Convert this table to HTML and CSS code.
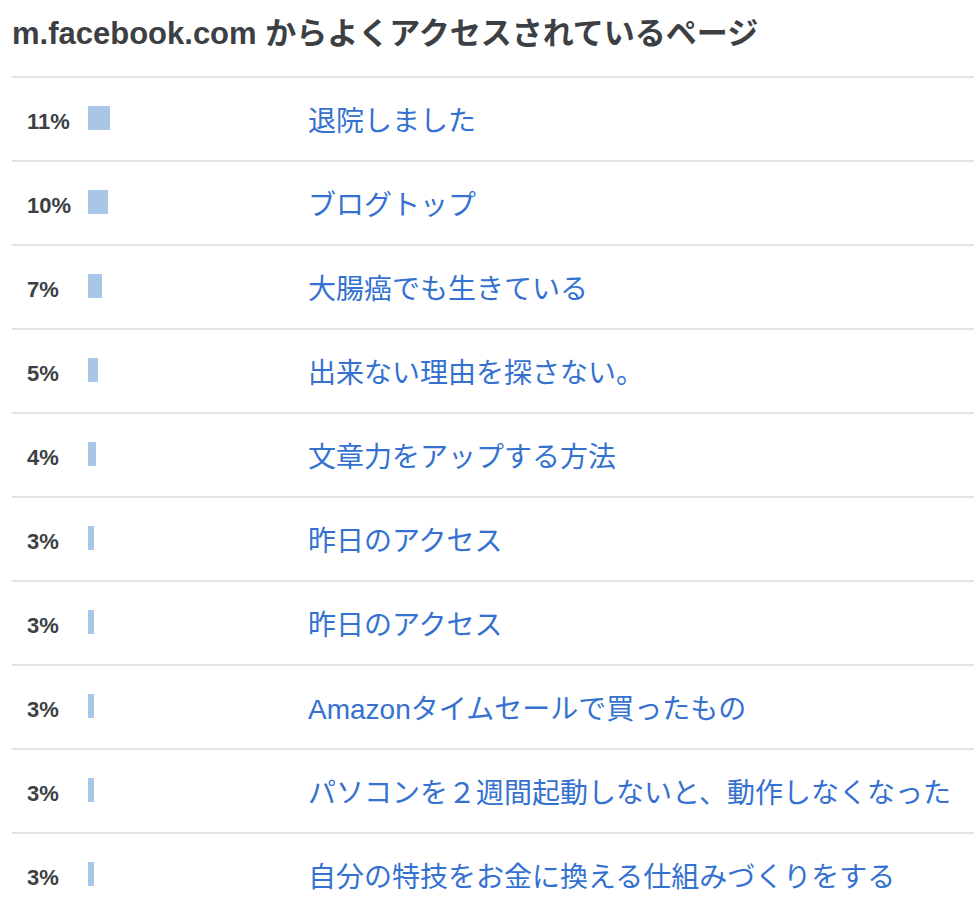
FILE: index.html
```html
<!DOCTYPE html>
<html lang="ja">
<head>
<meta charset="utf-8">
<title>m.facebook.com からよくアクセスされているページ</title>
<link rel="stylesheet" href="styles.css">
</head>
<body>
<section class="panel">
  <h2 class="title">m.facebook.com からよくアクセスされているページ</h2>
  <ul class="list">
    <li class="row"><span class="pct">11%</span><span class="barcell"><span class="bar" style="width:22px"></span></span><a class="link" href="#">退院しました</a></li>
    <li class="row"><span class="pct">10%</span><span class="barcell"><span class="bar" style="width:20px"></span></span><a class="link" href="#">ブログトップ</a></li>
    <li class="row"><span class="pct">7%</span><span class="barcell"><span class="bar" style="width:14px"></span></span><a class="link" href="#">大腸癌でも生きている</a></li>
    <li class="row"><span class="pct">5%</span><span class="barcell"><span class="bar" style="width:10px"></span></span><a class="link" href="#">出来ない理由を探さない。</a></li>
    <li class="row"><span class="pct">4%</span><span class="barcell"><span class="bar" style="width:8px"></span></span><a class="link" href="#">文章力をアップする方法</a></li>
    <li class="row"><span class="pct">3%</span><span class="barcell"><span class="bar" style="width:6px"></span></span><a class="link" href="#">昨日のアクセス</a></li>
    <li class="row"><span class="pct">3%</span><span class="barcell"><span class="bar" style="width:6px"></span></span><a class="link" href="#">昨日のアクセス</a></li>
    <li class="row"><span class="pct">3%</span><span class="barcell"><span class="bar" style="width:6px"></span></span><a class="link" href="#">Amazonタイムセールで買ったもの</a></li>
    <li class="row"><span class="pct">3%</span><span class="barcell"><span class="bar" style="width:6px"></span></span><a class="link" href="#">パソコンを２週間起動しないと、動作しなくなった</a></li>
    <li class="row"><span class="pct">3%</span><span class="barcell"><span class="bar" style="width:6px"></span></span><a class="link" href="#">自分の特技をお金に換える仕組みづくりをする</a></li>
  </ul>
</section>
</body>
</html>
```

FILE: styles.css
```css
html, body {
  margin: 0;
  padding: 0;
  background: #ffffff;
}

body {
  font-family: "Liberation Sans", "Noto Sans CJK JP", sans-serif;
  overflow: hidden;
}

.panel {
  padding-left: 12px;
}

.title {
  margin: 0;
  padding: 16px 0 24px;
  font-size: 31px;
  line-height: 36px;
  font-weight: bold;
  color: #3c3f43;
  white-space: nowrap;
}

.list {
  list-style: none;
  margin: 0;
  padding: 0;
}

.row {
  display: grid;
  grid-template-columns: 61px 220px 1fr;
  align-items: center;
  height: 82px;
  padding-left: 15px;
  border-top: 2px solid #dfe4e8;
}

.pct {
  font-size: 22px;
  line-height: 26px;
  font-weight: bold;
  color: #3c3f43;
  padding-top: 5px;
}

.barcell {
  display: flex;
  align-items: center;
  padding-bottom: 2px;
}

.bar {
  display: block;
  height: 24px;
  background: #a9c6e6;
}

.link {
  font-size: 28px;
  line-height: 34px;
  color: #3471d0;
  text-decoration: none;
  white-space: nowrap;
  padding-top: 5px;
}
```
